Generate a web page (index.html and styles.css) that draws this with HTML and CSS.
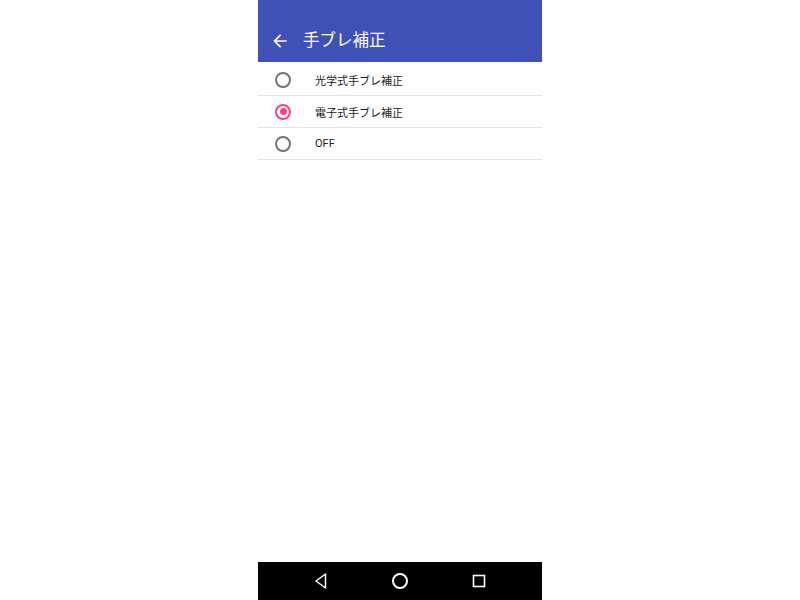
FILE: index.html
```html
<!DOCTYPE html>
<html lang="ja">
<head>
  <meta charset="UTF-8">
  <title>手ブレ補正</title>
  <link rel="stylesheet" href="styles.css">
</head>
<body>

<div class="phone">
  <div class="appbar">
    <svg class="back" width="20" height="20" viewBox="0 0 24 24"><path d="M20 11H7.83l5.59-5.59L12 4l-8 8 8 8 1.41-1.41L7.83 13H20v-2z" fill="#fff"/></svg>
    <span class="title">手ブレ補正</span>
  </div>

  <div class="list">
    <div class="row"><span class="radio"></span><span class="label">光学式手ブレ補正</span></div>
    <div class="row"><span class="radio on"></span><span class="label">電子式手ブレ補正</span></div>
    <div class="row"><span class="radio"></span><span class="label">OFF</span></div>
  </div>

  <div class="navbar">
    <svg width="16" height="18" viewBox="0 0 16 18"><path d="M12.5 2 L3 9 L12.5 16 Z" fill="none" stroke="#fff" stroke-width="1.5" stroke-linejoin="round"/></svg>
    <svg width="18" height="18" viewBox="0 0 18 18"><circle cx="9" cy="9" r="7" fill="none" stroke="#fff" stroke-width="2"/></svg>
    <svg width="16" height="16" viewBox="0 0 16 16"><rect x="2.5" y="2.5" width="11" height="11" fill="none" stroke="#fff" stroke-width="1.6"/></svg>
  </div>
</div>

</body>
</html>
```

FILE: styles.css
```css
body { margin: 0; background: #fff; font-family: Roboto, "Noto Sans CJK JP", sans-serif; }
.phone { width: 284px; height: 600px; margin: 0 auto; display: flex; flex-direction: column; }
.appbar { height: 62px; background: #3f51b5; display: flex; align-items: center; padding: 20px 0 0 12px; box-sizing: border-box; color: #fff; }
.back { margin-right: 13px; }
.title { font-size: 16.5px; line-height: 18px; }
.list { flex: 1; padding-top: 2px; }
.row { height: 31px; border-bottom: 1px solid #e4e4e4; display: flex; align-items: center; padding-left: 17px; }
.radio { width: 12px; height: 12px; border: 2px solid #757575; border-radius: 50%; margin-right: 24px; box-sizing: content-box; position: relative; }
.radio.on { border-color: #ff4081; }
.radio.on::after { content: ""; position: absolute; left: 2.5px; top: 2.5px; width: 7px; height: 7px; border-radius: 50%; background: #ff4081; }
.label { font-size: 11px; color: #212121; }
.navbar { height: 38px; background: #000; display: flex; align-items: center; justify-content: space-between; padding: 0 55px 0 55px; }
```
